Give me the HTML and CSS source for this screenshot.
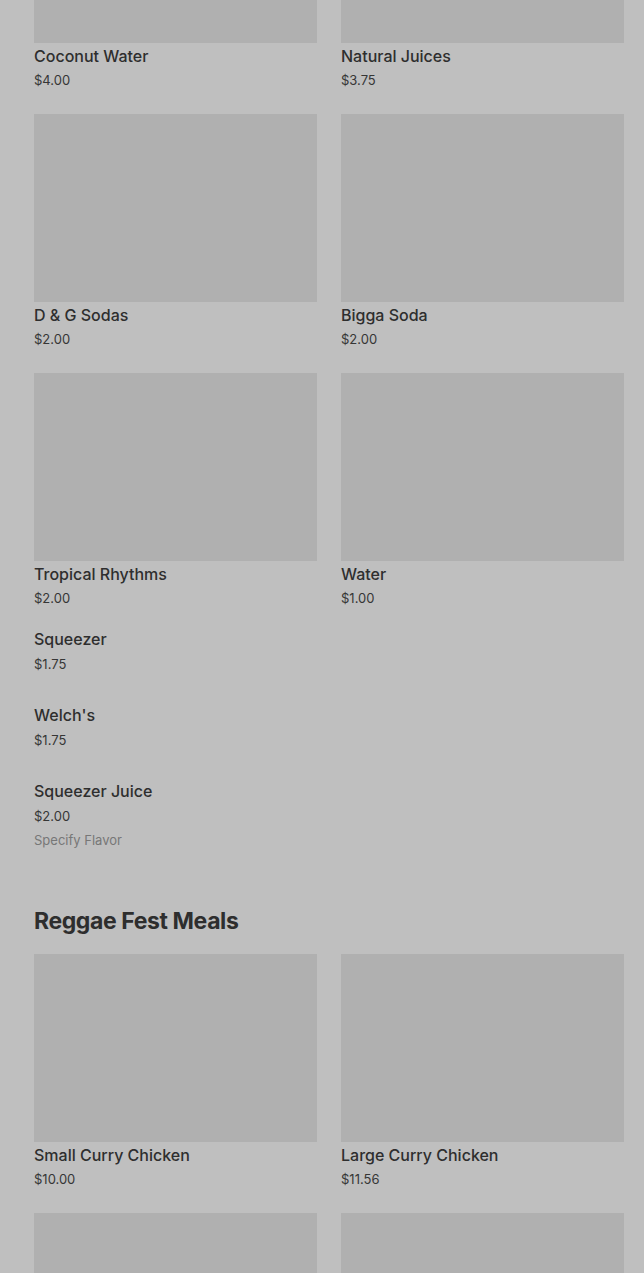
FILE: index.html
```html
<!DOCTYPE html>
<html>
<head>
<meta charset="utf-8">
<link rel="stylesheet" href="styles.css">
</head>
<body>
<main class="menu">
  <section class="grid first">
    <div class="card"><div class="thumb"></div><div class="name">Coconut Water</div><div class="price">$4.00</div></div>
    <div class="card"><div class="thumb"></div><div class="name">Natural Juices</div><div class="price">$3.75</div></div>
    <div class="card"><div class="thumb"></div><div class="name">D &amp; G Sodas</div><div class="price">$2.00</div></div>
    <div class="card"><div class="thumb"></div><div class="name">Bigga Soda</div><div class="price">$2.00</div></div>
    <div class="card"><div class="thumb"></div><div class="name">Tropical Rhythms</div><div class="price">$2.00</div></div>
    <div class="card"><div class="thumb"></div><div class="name">Water</div><div class="price">$1.00</div></div>
  </section>
  <section class="list">
    <div class="item"><div class="name">Squeezer</div><div class="price">$1.75</div></div>
    <div class="item"><div class="name">Welch's</div><div class="price">$1.75</div></div>
    <div class="item"><div class="name">Squeezer Juice</div><div class="price">$2.00</div><div class="note">Specify Flavor</div></div>
  </section>
  <h2 class="heading">Reggae Fest Meals</h2>
  <section class="grid">
    <div class="card"><div class="thumb"></div><div class="name">Small Curry Chicken</div><div class="price">$10.00</div></div>
    <div class="card"><div class="thumb"></div><div class="name">Large Curry Chicken</div><div class="price">$11.56</div></div>
    <div class="card"><div class="thumb"></div></div>
    <div class="card"><div class="thumb"></div></div>
  </section>
</main>
</body>
</html>
```
FILE: styles.css
```css
html, body {
  margin: 0;
  padding: 0;
  background: #bfbfbf;
  height: 1273px;
  overflow: hidden;
}
body {
  font-family: Inter, "Noto Sans", sans-serif;
  color: #2f2f2f;
}
.menu {
  padding: 0 20px 0 34px;
}
.grid {
  display: grid;
  grid-template-columns: 1fr 1fr;
  column-gap: 24px;
  row-gap: 24px;
}
.grid.first {
  margin-top: -145px;
}
.thumb {
  height: 188px;
  background: #b0b0b0;
}
.name {
  font-size: 16px;
  line-height: 20px;
  font-weight: 500;
  margin-top: 3px;
  color: #2e2e2e;
}
.price {
  font-size: 13px;
  line-height: 20px;
  margin-top: 4px;
  color: #363636;
}
.list {
  margin-top: 21px;
  display: flex;
  flex-direction: column;
  gap: 31px;
}
.item .name { margin-top: 0; }
.item .price { margin-top: 5px; }
.note {
  font-size: 13px;
  line-height: 20px;
  color: #777;
  margin-top: 4px;
}
.heading {
  font-size: 23px;
  line-height: 32px;
  font-weight: 700;
  margin: 55px 0 17px;
  color: #2e2e2e;
  letter-spacing: -0.4px;
}
```
